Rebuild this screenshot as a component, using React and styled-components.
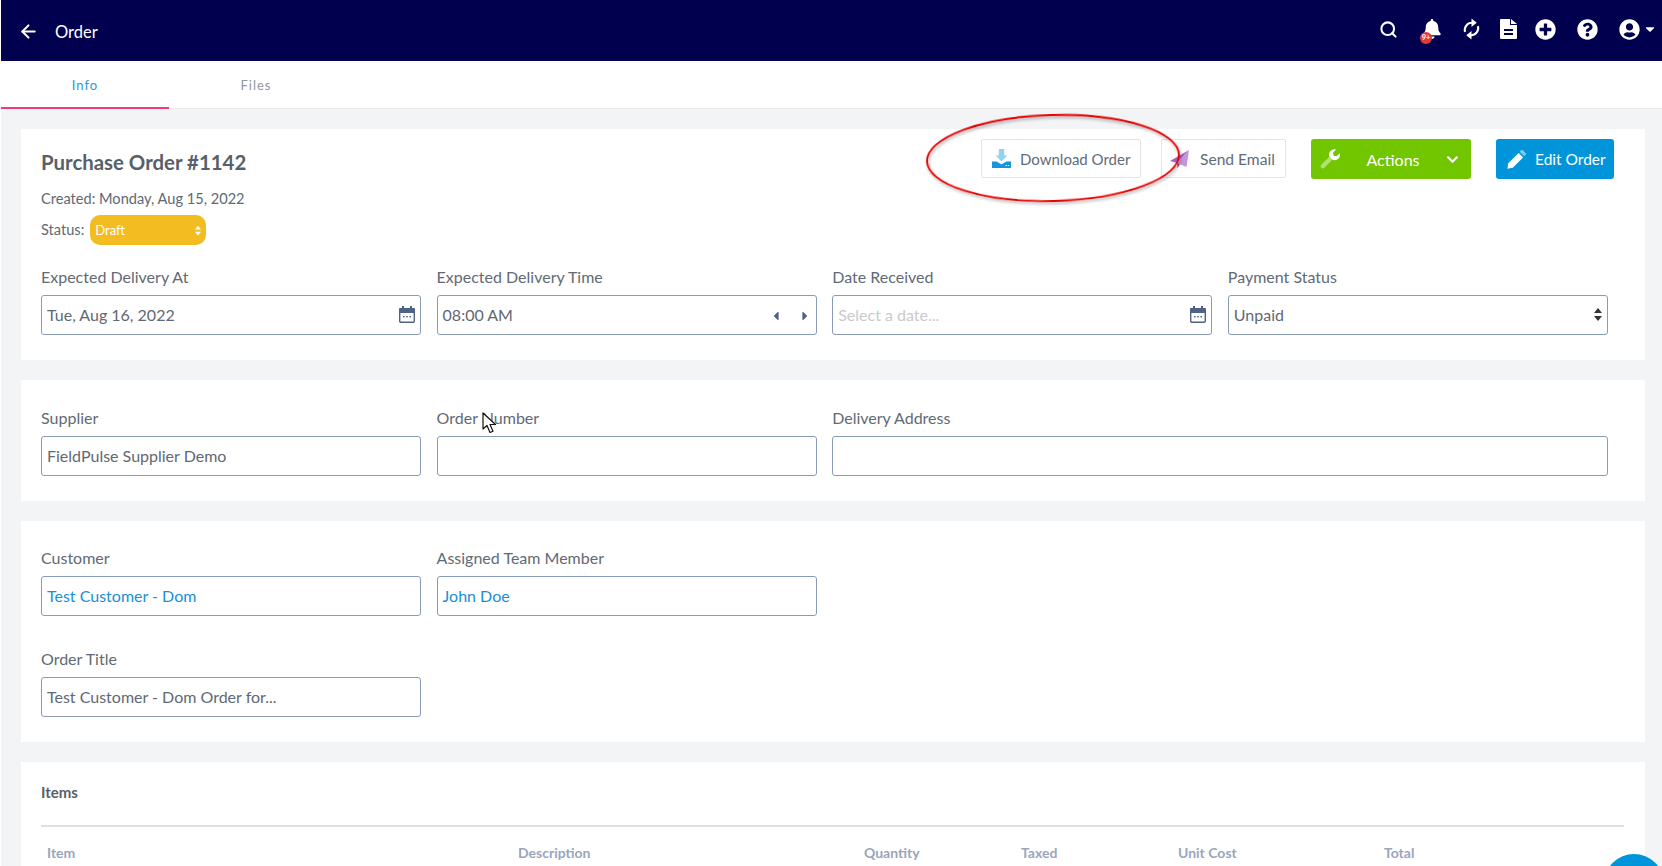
import React from 'react';
import styled, { createGlobalStyle } from 'styled-components';
import {
  FaBell, FaPlusCircle, FaQuestionCircle, FaUserCircle, FaCaretDown,
  FaCaretLeft, FaCaretRight, FaChevronDown,
} from 'react-icons/fa';
import { ArrowLeft, Search } from 'lucide-react';

const GlobalStyle = createGlobalStyle`
  html, body {
    margin: 0;
    height: 100%;
    overflow: hidden;
    background: #fff;
  }
  body {
    font-family: "Lato", "Noto Sans", sans-serif;
    font-size: 16px;
    color: #5f6873;
  }
  * { box-sizing: border-box; }
`;

const Page = styled.div`
  position: relative;
  width: 1662px;
  height: 866px;
  padding-left: 1px;
  overflow: hidden;
`;

const NavBar = styled.header`
  height: 61px;
  background: #00004e;
  color: #fff;
  display: flex;
  align-items: center;
  justify-content: space-between;
  padding: 0 5px 0 17px;
`;

const NavTitle = styled.div`
  display: flex;
  align-items: center;
  gap: 16px;
  font-size: 16.5px;
  padding-top: 2px;
`;

const NavIcons = styled.div`
  display: flex;
  align-items: center;
  margin-bottom: 3px;
`;

const NavIcon = styled.span`
  position: relative;
  width: ${p => p.$w || 42}px;
  padding-left: ${p => p.$pl || 0}px;
  display: flex;
  align-items: center;
  justify-content: center;
  font-size: 20px;
`;

const UserMenu = styled.span`
  width: 49px;
  display: flex;
  align-items: center;
  justify-content: flex-end;
  gap: 3px;
`;

const Badge = styled.span`
  position: absolute;
  left: 11px;
  top: 13px;
  width: 12px;
  height: 12px;
  border-radius: 50%;
  background: #dc3c3c;
  color: #fff;
  font-size: 7.5px;
  font-weight: 700;
  line-height: 12px;
  text-align: center;
`;

const TabBar = styled.nav`
  height: 48px;
  display: flex;
  gap: 3px;
  background: #fff;
  border-bottom: 1px solid #e9ebee;
`;

const Tab = styled.div`
  width: 168px;
  height: 48px;
  display: flex;
  align-items: center;
  justify-content: center;
  font-size: 13px;
  letter-spacing: 1px;
  padding-top: 1px;
  color: ${p => (p.$active ? '#2f96d8' : '#8f98a3')};
  border-bottom: 2px solid ${p => (p.$active ? '#f5387a' : 'transparent')};
`;

const Content = styled.main`
  height: 757px;
  background: #f3f4f6;
  padding: 20px 17px 0 20px;
  display: flex;
  flex-direction: column;
  gap: 20px;
`;

const Card = styled.section`
  background: #fff;
  padding: ${p => p.$pad || '20px'};
  flex-shrink: 0;
`;

const HeaderRow = styled.div`
  display: flex;
  justify-content: space-between;
  align-items: flex-start;
  margin-right: 10px;
`;

const Title = styled.h1`
  margin: -1px 0 0;
  font-size: 20.4px;
  line-height: 28px;
  font-weight: 700;
  color: #575f68;
`;

const MetaLine = styled.div`
  font-size: 14.6px;
  line-height: 20px;
  margin-top: ${p => p.$mt || 0}px;
  display: flex;
  align-items: center;
`;

const StatusPill = styled.div`
  width: 116px;
  height: 30px;
  margin-left: 6px;
  padding: 0 5px;
  border-radius: 10px;
  background: #f3bd22;
  color: #fff;
  font-size: 13px;
  display: flex;
  align-items: center;
  justify-content: space-between;
`;

const Actions = styled.div`
  display: flex;
  align-items: flex-start;
  margin: -10px 1px 0 0;
`;

const GhostButton = styled.button`
  width: ${p => p.$w}px;
  height: 39px;
  margin-right: ${p => p.$mr}px;
  background: #fff;
  border: 1px solid #e2e4e8;
  border-radius: 2px;
  color: #5f6b7a;
  font: inherit;
  font-size: ${p => p.$fs}px;
  display: flex;
  align-items: center;
  gap: ${p => p.$gap}px;
  padding: 0 0 0 ${p => p.$pl}px;
`;

const ActionsButton = styled.button`
  width: 160px;
  height: 40px;
  margin-right: 25px;
  background: #72c600;
  border: none;
  border-radius: 3px;
  color: #fff;
  font: inherit;
  font-size: 16px;
  display: flex;
  align-items: center;
  justify-content: space-between;
  padding: 0 12px 0 9px;
`;

const EditButton = styled.button`
  width: 118px;
  height: 40px;
  background: #0095db;
  border: none;
  border-radius: 3px;
  color: #fff;
  font: inherit;
  font-size: 15.5px;
  display: flex;
  align-items: center;
  gap: 9px;
  padding: 0 0 0 11px;
`;

const FieldGrid = styled.div`
  width: 1567px;
  display: grid;
  grid-template-columns: repeat(4, 380px);
  column-gap: 15.6px;
  row-gap: 33px;
  margin-top: ${p => p.$mt || 0}px;
`;

const Field = styled.div`
  grid-column: span ${p => p.$span || 1};
`;

const Label = styled.label`
  display: block;
  height: 20px;
  line-height: 20px;
  margin-bottom: 8px;
  font-size: 16px;
  color: #616a75;
`;

const InputBox = styled.div`
  height: 40px;
  border: 1px solid #8a9bb8;
  border-radius: 3px;
  background: #fff;
  padding: 0 5px 1px;
  display: flex;
  align-items: center;
  justify-content: space-between;
  font-size: 16px;
  color: ${p => (p.$link ? '#1a8fd6' : p.$placeholder ? '#c9cacc' : '#5f6873')};
`;

const Stepper = styled.div`
  display: flex;
  gap: 15px;
  margin-right: -1px;
  color: #4d6285;
  font-size: 14px;
  padding-top: 2px;
`;

const SectionTitle = styled.h2`
  margin: 0;
  font-size: 15px;
  line-height: 20px;
  font-weight: 700;
  color: #575f68;
`;

const Divider = styled.hr`
  width: 1583px;
  height: 2px;
  margin: 23px 0 0;
  border: none;
  background: #dedfe0;
`;

const TableHead = styled.div`
  display: grid;
  grid-template-columns: 471px 346px 157px 157px 206px 100px;
  padding: 17px 0 0 6px;
  font-size: 14px;
  font-weight: 700;
  color: #9aa5bd;
`;

const ChatBubble = styled.div`
  position: absolute;
  left: 1604px;
  top: 854px;
  width: 60px;
  height: 60px;
  border-radius: 50%;
  background: #0095db;
`;

const Ellipse = styled.svg`
  position: absolute;
  left: 920px;
  top: 108px;
  width: 266px;
  height: 100px;
  pointer-events: none;
`;

const Cursor = styled.svg`
  position: absolute;
  left: 482px;
  top: 412px;
  width: 15px;
  height: 22px;
`;

const SyncIcon = () => (
  <svg width="19" height="22" viewBox="0 0 20 22">
    <path d="M3.2 14A7.5 7.5 0 0 1 10.5 4.5" fill="none" stroke="#fff" strokeWidth="2.2" />
    <path d="M10 0l5.5 4.5L10 9z" fill="#fff" />
    <path d="M16.8 8A7.5 7.5 0 0 1 9.5 17.5" fill="none" stroke="#fff" strokeWidth="2.2" />
    <path d="M10 13l-5.5 4.5L10 22z" fill="#fff" />
  </svg>
);

const DocIcon = () => (
  <svg width="17" height="20" viewBox="0 0 17 20">
    <path d="M1 0h9v6h7v13a1 1 0 0 1-1 1H1a1 1 0 0 1-1-1V1a1 1 0 0 1 1-1z" fill="#fff" />
    <path d="M11 0l6 5h-6z" fill="#fff" />
    <rect x="4" y="10" width="9" height="2" fill="#00004e" />
    <rect x="4" y="14" width="9" height="2" fill="#00004e" />
  </svg>
);

const SortArrows = ({ color, width, height }) => (
  <svg width={width} height={height} viewBox="0 0 8 13">
    <path d="M4 0l4 5H0z" fill={color} />
    <path d="M4 13l4-5H0z" fill={color} />
  </svg>
);

const CalendarIcon = () => (
  <svg width="16" height="17" viewBox="0 0 16 17">
    <rect x="0.7" y="2.7" width="14.6" height="13.6" rx="1.2" fill="#fff" stroke="#4d6285" strokeWidth="1.4" />
    <rect x="0" y="2" width="16" height="5" rx="1.2" fill="#4d6285" />
    <rect x="3" y="0" width="2" height="3" fill="#4d6285" />
    <rect x="11" y="0" width="2" height="3" fill="#4d6285" />
    <rect x="4" y="10" width="1.6" height="1.4" fill="#4d6285" />
    <rect x="7.2" y="10" width="1.6" height="1.4" fill="#4d6285" />
    <rect x="10.4" y="10" width="1.6" height="1.4" fill="#4d6285" />
  </svg>
);

const DownloadIcon = () => (
  <svg width="19" height="19" viewBox="0 0 19 19">
    <path d="M6.8 0h5.4v6.5h3.2L9.5 12.4 3.6 6.5h3.2z" fill="#93d3f2" />
    <path d="M0 12.5h4.6l4.9 3 4.9-3H19V19H0z" fill="#1795dc" />
    <rect x="13.5" y="16" width="1.4" height="1" fill="#fff" />
    <rect x="15.8" y="16" width="1.4" height="1" fill="#fff" />
  </svg>
);

const PlaneIcon = () => (
  <svg width="19" height="18" viewBox="0 0 19 18">
    <path d="M0 11 19 0 7 13z" fill="#a75fc7" />
    <path d="M19 0 16.5 17 7 13z" fill="#c793db" />
    <path d="M7 13 7.5 18 10 14.3z" fill="#8f4cb0" />
  </svg>
);

const WrenchIcon = () => (
  <svg width="20" height="20" viewBox="0 0 20 20">
    <path d="M9.8 7.2 1.3 15.7a2.1 2.1 0 0 0 0 3 2.1 2.1 0 0 0 3 0l8.5-8.5z" fill="#fff" opacity="0.45" />
    <path d="M19.7 4.2 16.6 7.3l-3-.6-.6-3L16 .6a5.3 5.3 0 0 0-6.6 6.9l3.2 3.2a5.3 5.3 0 0 0 7.1-6.5z" fill="#fff" />
  </svg>
);

const PencilIcon = () => (
  <svg width="19" height="19" viewBox="0 0 19 19">
    <path d="M11.6 2.9 16.1 7.4 5.8 17.7 0.4 18.8 1.3 13.2z" fill="#fff" />
    <path d="M12.7 1.8 14.2.3a1.2 1.2 0 0 1 1.6 0l2.9 2.9a1.2 1.2 0 0 1 0 1.6l-1.5 1.5z" fill="#fff" opacity="0.5" />
  </svg>
);

const columns = ['Item', 'Description', 'Quantity', 'Taxed', 'Unit Cost', 'Total'];

const App = () => (
  <Page>
    <GlobalStyle />
    <NavBar>
      <NavTitle>
        <ArrowLeft size={21} strokeWidth={2.4} />
        <span>Order</span>
      </NavTitle>
      <NavIcons>
        <NavIcon><Search size={19} strokeWidth={2.6} /></NavIcon>
        <NavIcon $pl={4}><FaBell /><Badge>9+</Badge></NavIcon>
        <NavIcon $w={41}><SyncIcon /></NavIcon>
        <NavIcon $w={33}><DocIcon /></NavIcon>
        <NavIcon $w={41}><FaPlusCircle size={21} /></NavIcon>
        <NavIcon><FaQuestionCircle size={21} /></NavIcon>
        <UserMenu><FaUserCircle size={21} /><FaCaretDown size={14} /></UserMenu>
      </NavIcons>
    </NavBar>
    <TabBar>
      <Tab $active>Info</Tab>
      <Tab>Files</Tab>
    </TabBar>
    <Content>
      <Card $pad="20px 20px 25px">
        <HeaderRow>
          <div>
            <Title>Purchase Order #1142</Title>
            <MetaLine $mt={13}>Created: Monday, Aug 15, 2022</MetaLine>
            <MetaLine $mt={6}>
              Status:
              <StatusPill>
                Draft
                <SortArrows color="#fff" width={6} height={11} />
              </StatusPill>
            </MetaLine>
          </div>
          <Actions>
            <GhostButton $w={160} $mr={20} $pl={10} $gap={9} $fs={15}><DownloadIcon />Download Order</GhostButton>
            <GhostButton $w={125} $mr={25} $pl={8} $gap={11} $fs={15.6}><PlaneIcon />Send Email</GhostButton>
            <ActionsButton><WrenchIcon />Actions<FaChevronDown size={13} /></ActionsButton>
            <EditButton><PencilIcon />Edit Order</EditButton>
          </Actions>
        </HeaderRow>
        <FieldGrid $mt={22}>
          <Field>
            <Label>Expected Delivery At</Label>
            <InputBox>Tue, Aug 16, 2022<CalendarIcon /></InputBox>
          </Field>
          <Field>
            <Label>Expected Delivery Time</Label>
            <InputBox>
              08:00 AM
              <Stepper><FaCaretLeft /><FaCaretRight /></Stepper>
            </InputBox>
          </Field>
          <Field>
            <Label>Date Received</Label>
            <InputBox $placeholder>Select a date...<CalendarIcon /></InputBox>
          </Field>
          <Field>
            <Label>Payment Status</Label>
            <InputBox>Unpaid<SortArrows color="#333" width={8} height={13} /></InputBox>
          </Field>
        </FieldGrid>
      </Card>
      <Card $pad="28px 20px 25px">
        <FieldGrid>
          <Field>
            <Label>Supplier</Label>
            <InputBox>FieldPulse Supplier Demo</InputBox>
          </Field>
          <Field>
            <Label>Order Number</Label>
            <InputBox />
          </Field>
          <Field $span={2}>
            <Label>Delivery Address</Label>
            <InputBox />
          </Field>
        </FieldGrid>
      </Card>
      <Card $pad="27px 20px 25px">
        <FieldGrid>
          <Field>
            <Label>Customer</Label>
            <InputBox $link>Test Customer - Dom</InputBox>
          </Field>
          <Field>
            <Label>Assigned Team Member</Label>
            <InputBox $link>John Doe</InputBox>
          </Field>
          <Field $span={2} />
          <Field>
            <Label>Order Title</Label>
            <InputBox>Test Customer - Dom Order for...</InputBox>
          </Field>
        </FieldGrid>
      </Card>
      <Card $pad="20px 20px 20px">
        <SectionTitle>Items</SectionTitle>
        <Divider />
        <TableHead>
          {columns.map(col => <div key={col}>{col}</div>)}
        </TableHead>
      </Card>
    </Content>

    <Ellipse viewBox="0 0 266 100">
      <defs>
        <filter id="ring-shadow" x="-5%" y="-10%" width="110%" height="125%">
          <feDropShadow dx="1" dy="2" stdDeviation="1.5" floodColor="#000" floodOpacity="0.35" />
        </filter>
      </defs>
      <ellipse cx="133" cy="50" rx="126" ry="43" fill="none" stroke="#e60000" strokeWidth="1.8" filter="url(#ring-shadow)" transform="rotate(-1.5 133 50)" />
    </Ellipse>
    <Cursor viewBox="0 0 15 22">
      <path d="M1 1v16l4-3.5 3 7 3-1.3-3-6.7h5.5z" fill="#fff" stroke="#111" strokeWidth="1.2" strokeLinejoin="round" />
    </Cursor>
    <ChatBubble />
  </Page>
);

export default App;
